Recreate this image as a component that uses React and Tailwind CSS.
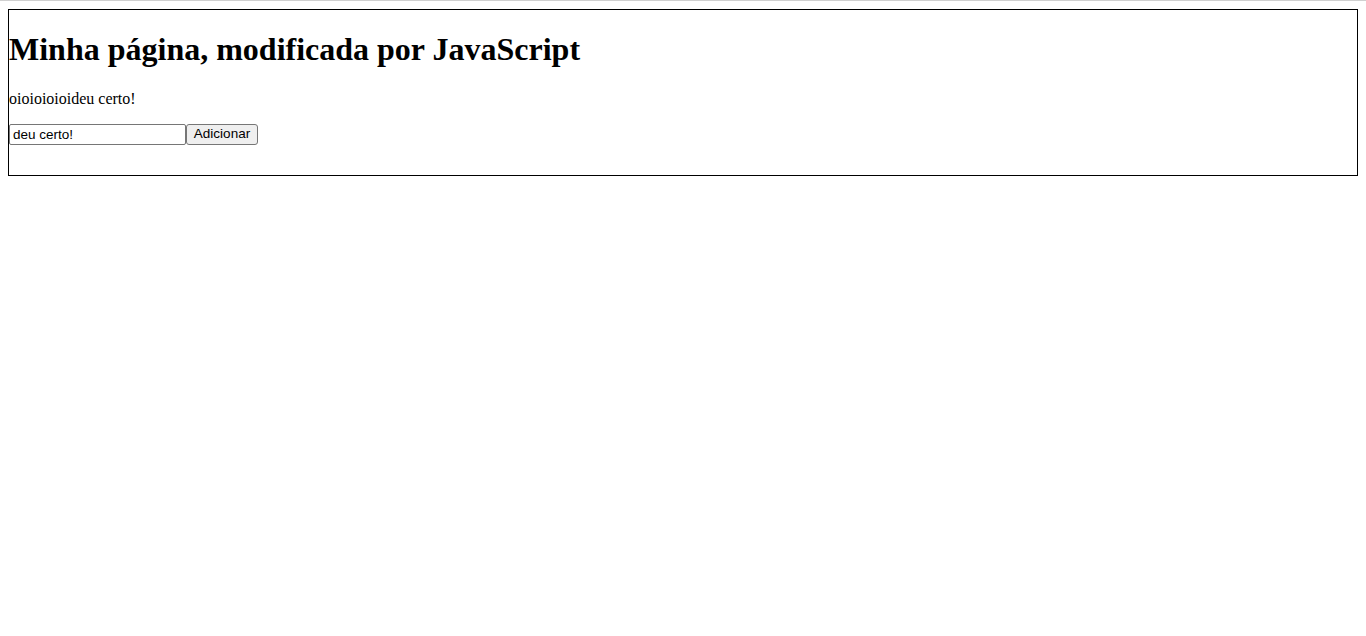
import React, { useState } from "react";

const serif = "font-['Liberation_Serif','Times_New_Roman',serif]";
const sans = "font-['Liberation_Sans',Arial,sans-serif]";

export default function App() {
  const [texto, setTexto] = useState("deu certo!");
  const [conteudo, setConteudo] = useState("oioioioioideu certo!");

  const adicionar = () => {
    setConteudo(conteudo + texto);
  };

  return (
    <div className={`min-h-[636px] bg-white text-black ${serif}`}>
      <div className="h-px bg-[#d0d0d0]" />
      <div className="p-2 pt-2">
        <div className="border border-black">
          <h1 className="text-[32px] font-bold leading-[37px] my-[21.44px]">
            Minha página, modificada por JavaScript
          </h1>
          <p className="text-[16px] leading-[18px] mb-4">{conteudo}</p>
          <div className="flex items-start h-[22px] mb-[29px]">
            <input
              className={`w-[177px] h-[21px] border border-[#767676] rounded-[2px] px-[3px] py-px text-[13.5px] leading-[16px] ${sans} outline-none`}
              value={texto}
              onChange={(e) => setTexto(e.target.value)}
            />
            <button
              className={`w-[72px] h-[21px] bg-[#efefef] border border-[#767676] rounded-[3px] text-[13.5px] leading-[16px] text-center ${sans}`}
              onClick={adicionar}
            >
              Adicionar
            </button>
          </div>
        </div>
      </div>
    </div>
  );
}
